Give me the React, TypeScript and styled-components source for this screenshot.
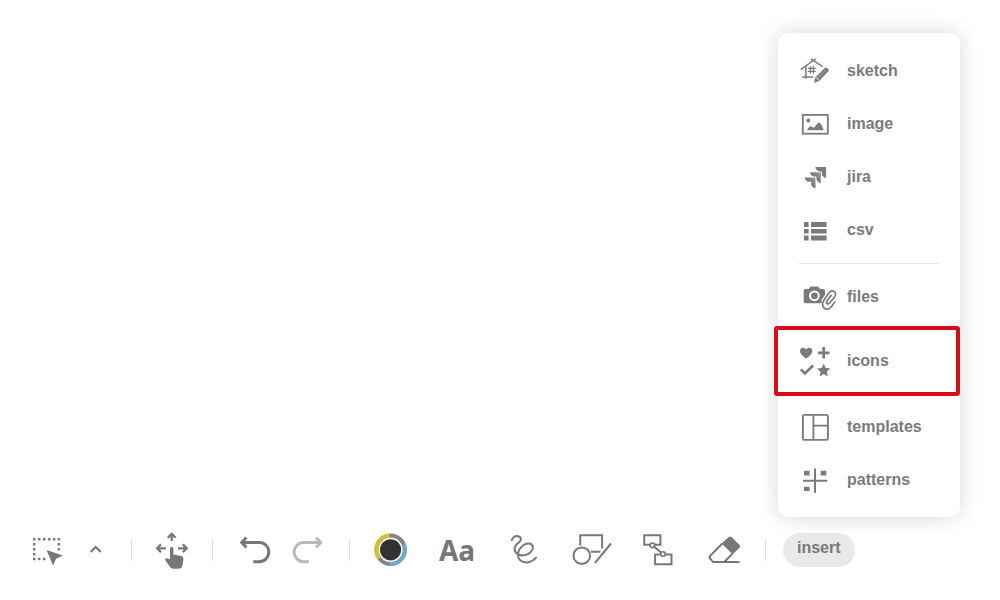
import React from "react";
import styled, { createGlobalStyle } from "styled-components";

const GlobalStyle = createGlobalStyle`
  * { box-sizing: border-box; }
  body {
    margin: 0;
    background: #fff;
    color: #777;
    font-family: "Liberation Sans", Arial, sans-serif;
  }
`;

const Page = styled.div`
  min-height: 100vh;
  display: flex;
  flex-direction: column;
  padding-bottom: 33px;
`;

const Canvas = styled.main`
  flex: 1;
  display: flex;
  justify-content: flex-end;
  align-items: flex-end;
  padding: 33px 40px 16px;
`;

const Menu = styled.nav`
  width: 182px;
  padding: 11px 0;
  border-radius: 10px;
  background: #fff;
  box-shadow: 0 0 22px rgba(0, 0, 0, 0.16);
`;

const MenuItem = styled.button<{ $marked?: boolean }>`
  display: flex;
  align-items: center;
  gap: 15px;
  width: ${(p) => (p.$marked ? "186px" : "100%")};
  height: ${(p) => (p.$marked ? "70px" : "53px")};
  margin: ${(p) => (p.$marked ? "3px 0 4px -4px" : "0")};
  padding: 0 20px;
  border: ${(p) => (p.$marked ? "4px solid #d60d18" : "0")};
  border-radius: ${(p) => (p.$marked ? "3px" : "0")};
  background: none;
  color: #7b7b7b;
  font: bold 16px/20px "Liberation Sans", Arial, sans-serif;
  text-align: left;
  cursor: pointer;
`;

const MenuRule = styled.hr`
  height: 1px;
  margin: 7px 21px 6px;
  border: 0;
  background: #e9e9e9;
`;

const Toolbar = styled.div`
  display: flex;
  align-items: center;
  padding-left: 7px;
`;

const Group = styled.div<{ $gap?: number; $end?: number }>`
  display: flex;
  gap: ${(p) => p.$gap ?? 0}px;
  padding: 0 ${(p) => p.$end ?? 23}px 0 23px;
`;

const Separator = styled.span`
  width: 1px;
  height: 21px;
  background: #dcdcdc;
`;

const Tool = styled.button`
  display: flex;
  align-items: center;
  justify-content: center;
  width: 34px;
  height: 34px;
  padding: 0;
  border: 0;
  background: none;
  color: #777;
  cursor: pointer;

  &:disabled {
    color: #bababa;
    cursor: default;
  }
`;

const TextGlyph = styled.span`
  font: bold 28px/34px "Noto Sans", sans-serif;
`;

const InsertButton = styled.button`
  height: 34px;
  margin-left: 17px;
  padding: 0 14px 4px;
  border: 0;
  border-radius: 17px;
  background: #e9e9e9;
  color: #77797c;
  font: bold 16px/20px "Liberation Sans", Arial, sans-serif;
  cursor: pointer;
`;

const Svg = styled.svg`
  flex: none;
  overflow: visible;
`;

function Icon({ children }: { children: React.ReactNode }) {
  return (
    <Svg
      width="34"
      height="34"
      viewBox="0 0 34 34"
      fill="none"
      stroke="currentColor"
      strokeWidth="2"
      aria-hidden="true"
    >
      {children}
    </Svg>
  );
}

const SketchIcon = () => (
  <Icon>
    <g strokeWidth="1.5">
      <path d="M2.7 15.6 17.6 4.8M13 4.8l11.6 7.8M7.9 12.5v12.3M4.2 23h11" />
      <path d="M12.4 12.2v7.4M15.4 12.2v7.4M9.8 14.4h8M9.8 17.4h8" strokeWidth="1.4" />
    </g>
    <path d="m16 28.8 1.2-5.4 9.6-9.5c1.2-1.3 4.9 1.6 3.8 3.2l-9.7 10.2z" fill="currentColor" stroke="none" />
    <path d="m17.4 22.8 3.8 3.8" stroke="#fff" strokeWidth=".8" />
    <path d="m19.3 24.8 8-8.8" stroke="#b5b5b5" strokeWidth=".8" />
  </Icon>
);

const ImageIcon = () => (
  <Icon>
    <rect x="4.8" y="7.9" width="25" height="18.8" strokeWidth="1.8" />
    <g fill="currentColor" stroke="none">
      <circle cx="10.3" cy="13.5" r="2" />
      <path d="M9 23.2c1-2.2 2.5-4 3.8-4s1.6 1.4 2.6 1.4c1.5 0 3.9-5.2 5.6-5.2 1.6 0 4.3 5.5 4.6 7.8z" />
    </g>
  </Icon>
);

const chevron = "M0 0h10.8v10.8c-2.4-.3-4.3-2.1-4.3-4.5V4.3h-2C2.1 4.3.2 2.4 0 0z";
const JiraIcon = () => (
  <Icon>
    <defs>
      <linearGradient id="jira-fade" x1="1" y1="0" x2="0" y2="1">
        <stop offset=".1" stopColor="#989898" />
        <stop offset=".5" stopColor="#777" />
      </linearGradient>
    </defs>
    <g stroke="none">
      <path d={chevron} transform="translate(17.3 7.1)" fill="currentColor" />
      <path d={chevron} transform="translate(12 12.3)" fill="url(#jira-fade)" />
      <path d={chevron} transform="translate(6.7 17.5)" fill="url(#jira-fade)" />
    </g>
  </Icon>
);

const CsvIcon = () => (
  <Icon>
    <path
      d="M6 9h4.6v5H6zM13 9h15.6v5H13zM6 16h4.6v4.4H6zM13 16h15.6v4.4H13zM6 22.4h4.6v5H6zM13 22.4h15.6v5H13z"
      fill="currentColor"
      stroke="none"
    />
  </Icon>
);

const FilesIcon = () => (
  <Icon>
    <path
      d="M7.5 9h3.3l1-1.6c.4-.6.8-.9 1.5-.9h6.2c.7 0 1.1.3 1.5.9l1 1.6h3.2c1.1 0 1.8.7 1.8 1.8v10.6c0 1.1-.7 1.8-1.8 1.8H7.5c-1.1 0-1.8-.7-1.8-1.8V10.8C5.7 9.7 6.4 9 7.5 9z"
      fill="currentColor"
      stroke="none"
    />
    <circle cx="16.4" cy="15.8" r="4.4" stroke="#fff" strokeWidth="2" />
    <g strokeLinecap="round" fill="none">
      <path d="M28.8 24.2 25 27.5l-.5-7 5-8 8-.5.3 6-7.5 9z" fill="#fff" stroke="#fff" strokeWidth="2" />
      <path
        d="m33.2 15.4-4.4 5.5c-1.4 2.2 1.2 4 2.9 2l5-6.2c3-4.2-2.4-8-5.6-4l-5.1 7.2c-2.3 3.2-1.6 7.1.8 8.6 2.4 1.4 5 .4 6.8-2l3.2-4.4"
        strokeWidth="1.7"
      />
    </g>
  </Icon>
);

const IconsIcon = () => (
  <Icon>
    <path
      d="M8.2 14.6C5 12.2 2 9.7 2 6.9c0-3.6 4.4-4.4 6.2-1.5 1.8-2.9 6.2-2.1 6.2 1.5 0 2.8-3 5.3-6.2 7.7z"
      fill="currentColor"
      stroke="none"
    />
    <path d="M25.7 3v11.6M19.9 8.8h11.6M2.8 25.4l4 4 8.3-7.8" strokeWidth="2.7" />
    <path
      d="m25.7 19.6 2 4.3 4.6.6-3.4 3.2.9 4.7-4.1-2.3-4.1 2.3.9-4.7-3.4-3.2 4.6-.6z"
      fill="currentColor"
      stroke="none"
    />
  </Icon>
);

const TemplatesIcon = () => (
  <Icon>
    <rect x="4.9" y="4.9" width="25" height="25" rx="1.5" strokeWidth="1.9" />
    <path d="M15.4 5v25M15.4 15.6H30" strokeWidth="1.8" />
  </Icon>
);

const PatternsIcon = () => (
  <Icon>
    <path d="M17 5.5v24.3M5 17.8h24.2" strokeWidth="2" />
    <path d="M6 7.8h5.6v4.6H6zM22.7 7.8h5.6v4.6h-5.6zM6 23.7h5.6v4.4H6z" fill="currentColor" stroke="none" />
  </Icon>
);

const SelectIcon = () => (
  <Icon>
    <path
      d="M3 5h2.4v2.4H3zM8 5h2.4v2.4H8zM13 5h2.4v2.4H13zM18 5h2.4v2.4H18zM23 5h2.4v2.4H23zM27.6 5H30v2.4h-2.4zM3 10h2.4v2.4H3zM3 15h2.4v2.4H3zM3 20h2.4v2.4H3zM3 24.8h2.4v2.4H3zM8 24.8h2.4v2.4H8zM13 24.8h2.4v2.4H13zM27.6 10H30v2.4h-2.4zM27.6 15H30v2.4h-2.4z"
      fill="currentColor"
      stroke="none"
    />
    <path d="m16.6 17 16.2 5.6-6.8 3.1-2.9 7z" fill="currentColor" stroke="none" />
  </Icon>
);

const CaretIcon = () => (
  <Icon>
    <path d="m11.7 19 5-5 5 5" />
  </Icon>
);

const PanIcon = () => (
  <Icon>
    <path
      d="M16.7 8V1.2M12.8 4.8l3.9-3.9 3.9 3.9M11 15.3H2.4M6 11.4l-3.9 3.9L6 19.2M23 15.3h8.6M27.8 11.4l3.9 3.9-3.9 3.9"
      strokeWidth="2.3"
    />
    <path
      d="M15 15.5c0-2 3.4-2 3.4 0v6l7.2 1.3c2 .4 3 1.6 2.8 3.6l-.9 5.8c-.4 2.4-2 3.6-4.2 3.6h-4.5c-1.5 0-2.6-.5-3.5-1.5l-5-7c-.6-1.2.8-2.3 2.1-1.9l2.6.8z"
      fill="currentColor"
      stroke="none"
    />
  </Icon>
);

const UndoIcon = () => (
  <Icon>
    <path d="M5 9.5h18.2a9.6 9.6 0 0 1 0 19.2h-6M10.4 4.4 5.6 9.5l4.8 5.1" strokeWidth="2.9" />
  </Icon>
);

const RedoIcon = () => (
  <Icon>
    <path d="M29.4 9.5H11.8a9.6 9.6 0 0 0 0 19.2H17M24 4.4l4.8 5.1-4.8 5.1" strokeWidth="2.9" />
  </Icon>
);

const ColorIcon = () => (
  <Icon>
    <g strokeWidth="4">
      <circle cx="17.6" cy="16.8" r="14.2" stroke="#8a8585" />
      <path d="M16.4 2.6A14.2 14.2 0 0 0 6.2 25.3" stroke="#cfc534" />
      <path d="M31 12a14.2 14.2 0 0 1-14.2 19" stroke="#6eaad0" />
    </g>
    <circle cx="17.6" cy="16.8" r="10.6" fill="#333" stroke="none" />
  </Icon>
);

const DrawIcon = () => (
  <Icon>
    <path
      d="M4.6 8C5 4.4 8.2 2.7 11 3.2c3.6.8 3.8 4 .9 6.2-2.9 2-4.7 4.2-4.2 7.5.7 4.2 5.4 6.3 10.2 5.2 5-1.2 8.9-5.3 7.9-8.9-1-3.5-6.4-3.4-10.1-.5-5.2 4-6.2 11.2-2.5 14.6 4.4 4 12.3 2.1 16.4-3.3"
      strokeWidth="2"
    />
  </Icon>
);

const ShapesIcon = () => (
  <Icon>
    <circle cx="7.8" cy="22.7" r="8.3" />
    <path d="M6.2 12.6V2.2h21.9v13.2M17 18.8h9.5M37 10.5 21 29.8" />
  </Icon>
);

const ConnectorIcon = () => (
  <Icon>
    <path d="M3.2 2.2h16.2v9.6H3.2zM14.1 21.6h16.4v9.6H14.1zM11.3 12.3 22 21" />
    <circle cx="11.4" cy="12.3" r="2.3" fill="#fff" strokeWidth="1.6" />
    <circle cx="22" cy="21" r="2.3" fill="#fff" strokeWidth="1.6" />
  </Icon>
);

const EraserIcon = () => (
  <Icon>
    <path d="M14.3 10.5 2.4 22.6c-1 1-.9 2.3-.1 3.2l2.9 3.3h26.4M24.5 20.6l-8.2 8.4" />
    <path
      d="M13.6 10.6 20.7 4c.9-.8 1.9-.8 2.8.1l8 8c.8.8.8 1.8 0 2.6l-6.8 6.6z"
      fill="currentColor"
      stroke="none"
    />
  </Icon>
);

export default function App() {
  return (
    <Page>
      <GlobalStyle />
      <Canvas>
        <Menu aria-label="insert">
          <MenuItem><SketchIcon />sketch</MenuItem>
          <MenuItem><ImageIcon />image</MenuItem>
          <MenuItem><JiraIcon />jira</MenuItem>
          <MenuItem><CsvIcon />csv</MenuItem>
          <MenuRule />
          <MenuItem><FilesIcon />files</MenuItem>
          <MenuItem $marked><IconsIcon />icons</MenuItem>
          <MenuItem><TemplatesIcon />templates</MenuItem>
          <MenuItem><PatternsIcon />patterns</MenuItem>
        </Menu>
      </Canvas>
      <Toolbar role="toolbar">
        <Group $gap={15} $end={18}>
          <Tool aria-label="select"><SelectIcon /></Tool>
          <Tool aria-label="selection options"><CaretIcon /></Tool>
        </Group>
        <Separator />
        <Group>
          <Tool aria-label="pan"><PanIcon /></Tool>
        </Group>
        <Separator />
        <Group $gap={22}>
          <Tool aria-label="undo"><UndoIcon /></Tool>
          <Tool aria-label="redo" disabled><RedoIcon /></Tool>
        </Group>
        <Separator />
        <Group $gap={33}>
          <Tool aria-label="color"><ColorIcon /></Tool>
          <Tool aria-label="text"><TextGlyph>Aa</TextGlyph></Tool>
          <Tool aria-label="draw"><DrawIcon /></Tool>
          <Tool aria-label="shapes"><ShapesIcon /></Tool>
          <Tool aria-label="connector"><ConnectorIcon /></Tool>
          <Tool aria-label="eraser"><EraserIcon /></Tool>
        </Group>
        <Separator />
        <InsertButton aria-expanded="true">insert</InsertButton>
      </Toolbar>
    </Page>
  );
}
